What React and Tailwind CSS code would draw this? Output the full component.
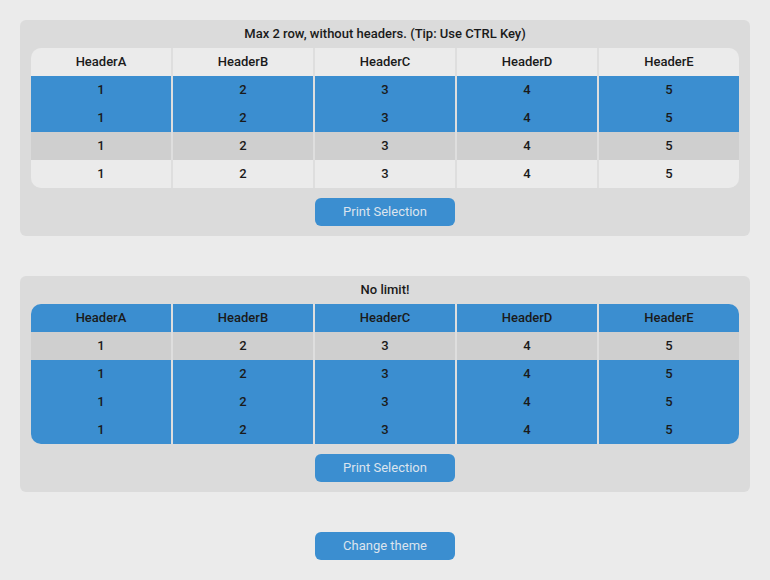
const headers = ['HeaderA', 'HeaderB', 'HeaderC', 'HeaderD', 'HeaderE'];
const values = ['1', '2', '3', '4', '5'];

const BLUE = 'bg-[#3b8ed0]';

const Table = ({ rows }) => (
  <div className="mx-[11px] grid grid-cols-5 gap-x-[2px] rounded-[10px] overflow-hidden bg-[#dedede]">
    {rows.map((row, r) =>
      row.cells.map((text, c) => (
        <div
          key={`${r}-${c}`}
          className={`h-[28px] flex items-center justify-center text-[13px] font-medium text-[#1a1a1a] ${row.bg}`}
        >
          {text}
        </div>
      ))
    )}
  </div>
);

const Button = ({ children }) => (
  <button className="w-[140px] h-[28px] rounded-[6px] bg-[#3b8ed0] text-[#dce4ee] text-[13px]">
    {children}
  </button>
);

const Panel = ({ title, rows }) => (
  <div className="w-[730px] bg-[#dbdbdb] rounded-[6px] pb-[10px] flex flex-col">
    <div className="h-[28px] flex items-center justify-center text-[13px] font-medium text-[#1a1a1a]">
      {title}
    </div>
    <Table rows={rows} />
    <div className="flex justify-center mt-[10px]">
      <Button>Print Selection</Button>
    </div>
  </div>
);

export default function App() {
  const first = [
    { cells: headers, bg: 'bg-[#ebebeb]' },
    { cells: values, bg: BLUE },
    { cells: values, bg: BLUE },
    { cells: values, bg: 'bg-[#cfcfcf]' },
    { cells: values, bg: 'bg-[#ebebeb]' },
  ];
  const second = [
    { cells: headers, bg: BLUE },
    { cells: values, bg: 'bg-[#cfcfcf]' },
    { cells: values, bg: BLUE },
    { cells: values, bg: BLUE },
    { cells: values, bg: BLUE },
  ];

  return (
    <div
      className="w-[770px] h-[580px] bg-[#ebebeb] flex flex-col items-center pt-[20px]"
      style={{ fontFamily: 'Roboto, "Liberation Sans", sans-serif' }}
    >
      <Panel title="Max 2 row, without headers. (Tip: Use CTRL Key)" rows={first} />
      <div className="mt-[40px]">
        <Panel title="No limit!" rows={second} />
      </div>
      <div className="mt-[40px]">
        <Button>Change theme</Button>
      </div>
    </div>
  );
}
